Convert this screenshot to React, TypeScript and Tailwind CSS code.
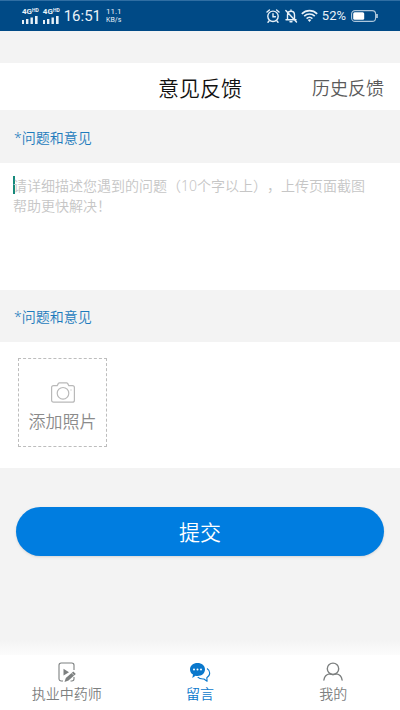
import React from "react";

function Signal() {
  return (
    <span className="flex flex-col items-center">
      <span className="flex items-start font-['Roboto','Noto_Sans',sans-serif] text-[8px] leading-[8px] font-bold">
        4G<span className="text-[5px] leading-[5px]">HD</span>
      </span>
      <svg width="16" height="8" viewBox="0 0 16 8" fill="currentColor" aria-hidden="true">
        <rect x="0" y="4" width="2" height="4" />
        <rect x="4" y="3" width="2.4" height="5" />
        <rect x="8.5" y="1.5" width="2.4" height="6.5" />
        <rect x="13" y="0" width="2.6" height="8" />
      </svg>
    </span>
  );
}

function StatusBar() {
  return (
    <div className="flex h-[31px] items-center justify-between border-t border-[#2f6ea3] bg-[#004a86] px-[22px] font-['Roboto','Noto_Sans',sans-serif] font-normal text-[#e8f1f8]">
      <div className="flex items-center">
        <Signal />
        <span className="w-1" />
        <Signal />
        <span className="ml-1 text-[15px] leading-5">16:51</span>
        <span className="ml-[5px] flex flex-col text-[8px] leading-[9px]">
          <span>11.1</span>
          <span className="text-[7px]">KB/s</span>
        </span>
      </div>
      <div className="flex items-center">
        <svg width="14" height="14" viewBox="0 0 14 14" fill="none" stroke="currentColor" strokeWidth="1.4" strokeLinecap="round" aria-hidden="true">
          <circle cx="7" cy="7.3" r="5.2" />
          <path d="M1 3 3.4 1M13 3l-2.4-2M7 4.8v2.9h2.4M3 12l-1 1.200M11 12l1 1.200" />
        </svg>
        <svg className="ml-[4px]" width="14" height="14" viewBox="0 0 14 14" fill="none" stroke="currentColor" strokeWidth="1.4" strokeLinecap="round" strokeLinejoin="round" aria-hidden="true">
          <path d="M3.500 10.500V6C3.500 3.800 5 2.300 7 2.300S10.500 3.800 10.500 6v4.500M2 10.800h10M6 12.800h2M7 1v1M1.800 1.500l10.700 11.500" />
        </svg>
        <svg className="ml-[3px]" width="17" height="14" viewBox="0 0 17 14" fill="none" stroke="currentColor" strokeWidth="1.6" aria-hidden="true">
          <path d="M.8 4.800C5.200.600 11.800.600 16.200 4.800M3.200 7.200c3-2.900 7.600-2.900 10.600 0M5.600 9.600c1.700-1.600 4.100-1.600 5.800 0" />
          <path d="m6.800 11 1.700 2 1.700-2c-1-.9-2.400-.9-3.400 0Z" fill="currentColor" stroke="none" />
        </svg>
        <span className="ml-[4px] text-[13px] leading-4">52%</span>
        <svg className="ml-[5px]" width="27" height="12" viewBox="0 0 27 12" fill="none" aria-hidden="true">
          <rect x=".6" y=".6" width="24" height="10.800" rx="3.500" stroke="currentColor" strokeOpacity=".75" strokeWidth="1.100" />
          <rect x="2.200" y="2.200" width="11" height="7.600" rx="1.500" fill="#fff" />
          <path d="M26 4v4" stroke="currentColor" strokeWidth="1.300" />
        </svg>
      </div>
    </div>
  );
}

function VideoIcon() {
  return (
    <svg width="20" height="20" viewBox="0 0 20 20" fill="none" aria-hidden="true">
      <path d="M17 8V3.200A2.200 2.200 0 0 0 14.800 1H4.200A2.200 2.200 0 0 0 2 3.200v13.600A2.200 2.200 0 0 0 4.200 19H6M13.500 19h1.300a2.200 2.200 0 0 0 2.200-2.200V15" stroke="currentColor" strokeWidth="1.100" />
      <path d="M6.500 6.800v6.800l5.500-3.400z" fill="currentColor" />
      <path d="m7.500 20 1.300-4 7.500-6.500 2.500 2.600-7.300 6.400z" fill="currentColor" />
      <path d="m14.300 10.500 2.800 3" stroke="#fff" strokeWidth=".6" />
    </svg>
  );
}

function ChatIcon() {
  return (
    <svg width="22" height="20" viewBox="0 0 22 20" fill="none" aria-hidden="true">
      <path d="M8.500 1C4.300 1 1 3.700 1 7.400c0 2.200 1.200 4 3 5.200L3.300 16l3.200-2.300c.6.200 1.300.2 2 .2 4.200 0 7.500-2.800 7.500-6.500S12.700 1 8.500 1Z" fill="currentColor" />
      <circle cx="5" cy="7.400" r="1" fill="#fff" />
      <circle cx="8.500" cy="7.400" r="1" fill="#fff" />
      <circle cx="12" cy="7.400" r="1" fill="#fff" />
      <path d="M18 6.500c1.700 1.100 2.700 2.700 2.700 4.600 0 2-1.100 3.600-2.900 4.700l.3 3.400-3.200-2.200c-2.500.2-4.800-.5-6.200-1.900" stroke="currentColor" strokeWidth="1.100" strokeLinejoin="round" />
    </svg>
  );
}

function PersonIcon() {
  return (
    <svg width="20" height="20" viewBox="0 0 20 20" fill="none" stroke="currentColor" strokeWidth="1.400" strokeLinecap="round" aria-hidden="true">
      <circle cx="10" cy="6.800" r="5.700" />
      <path d="M.9 18c.5-3.300 2.600-5.600 5.800-6.100 2.100.9 4.500.9 6.600 0 3.200.5 5.300 2.800 5.800 6.100" />
    </svg>
  );
}

function CameraIcon() {
  return (
    <svg width="24" height="21" viewBox="0 0 24 21" fill="none" stroke="#b9b9b9" strokeWidth="1.200" strokeLinejoin="round" aria-hidden="true">
      <path d="M2.600 3.600h3.600l1.200-2.200q.3-.6 1-.6h7.200q.7 0 1 .6l1.200 2.200h3.600q2 0 2 2v12.600q0 2-2 2H2.600q-2 0-2-2V5.600q0-2 2-2Z" />
      <circle cx="12" cy="11.300" r="5.800" />
      <path d="M19.500 8h1" />
    </svg>
  );
}

const tabs = [
  { label: "执业中药师", icon: <VideoIcon />, active: false },
  { label: "留言", icon: <ChatIcon />, active: true },
  { label: "我的", icon: <PersonIcon />, active: false },
];

export default function App() {
  return (
    <div className="flex min-h-screen flex-col bg-[#f3f3f3] font-['Noto_Sans','Noto_Sans_CJK_SC',sans-serif] font-[350]">
      <StatusBar />
      <header className="mt-8 grid h-[47px] grid-cols-[1fr_auto_1fr] items-center bg-white pt-0.5 pr-4">
        <h1 className="col-start-2 pl-4 text-[21px] leading-8 font-[350] text-[#111]">意见反馈</h1>
        <a href="#history" className="justify-self-end text-lg leading-7 text-[#5a5a5a]">历史反馈</a>
      </header>
      <main className="flex grow flex-col">
        <label htmlFor="feedback" className="flex h-[53px] items-center px-[14px] pt-0.5 text-sm text-[#1c7bbd]">
          *问题和意见
        </label>
        <div className="flex h-[127px] bg-white px-[13px] pt-[13px]">
          <span className="h-[18px] w-0.5 shrink-0 bg-[#16897a]" aria-hidden="true" />
          <textarea
            id="feedback"
            className="-ml-0.5 block h-[100px] w-full resize-none bg-transparent pr-4 text-sm leading-5 outline-none [text-spacing-trim:space-all] placeholder:text-[#c6c6c6]"
            placeholder="请详细描述您遇到的问题（10个字以上），上传页面截图帮助更快解决！"
          />
        </div>
        <h2 className="flex h-[52px] items-center px-[14px] pt-0.5 text-sm font-[350] text-[#1c7bbd]">*问题和意见</h2>
        <div className="bg-white px-[18px] pt-4 pb-[21px]">
          <button type="button" className="flex size-[89px] flex-col items-center border border-dashed border-[#bdbdbd] pt-[23px] text-[#8b8b8b]">
            <CameraIcon />
            <span className="mt-[7px] text-[17px] leading-6 whitespace-nowrap">添加照片</span>
          </button>
        </div>
        <div className="px-4 pt-[39px]">
          <button type="submit" className="h-[49px] w-full rounded-full bg-[#007de0] pt-0.5 text-[21px] text-white shadow">提交</button>
        </div>
        <div className="mt-auto h-4 bg-linear-to-b from-[#f3f3f3] to-[#fcfcfc]" />
      </main>
      <nav className="grid h-[55px] grid-cols-3 bg-white">
        {tabs.map((tab) => (
          <button
            key={tab.label}
            type="button"
            className={`flex flex-col items-center pt-[7px] text-sm leading-5 ${tab.active ? "text-[#0a78cc]" : "text-[#7d8080]"}`}
          >
            {tab.icon}
            <span className="mt-0.5">{tab.label}</span>
          </button>
        ))}
      </nav>
    </div>
  );
}
